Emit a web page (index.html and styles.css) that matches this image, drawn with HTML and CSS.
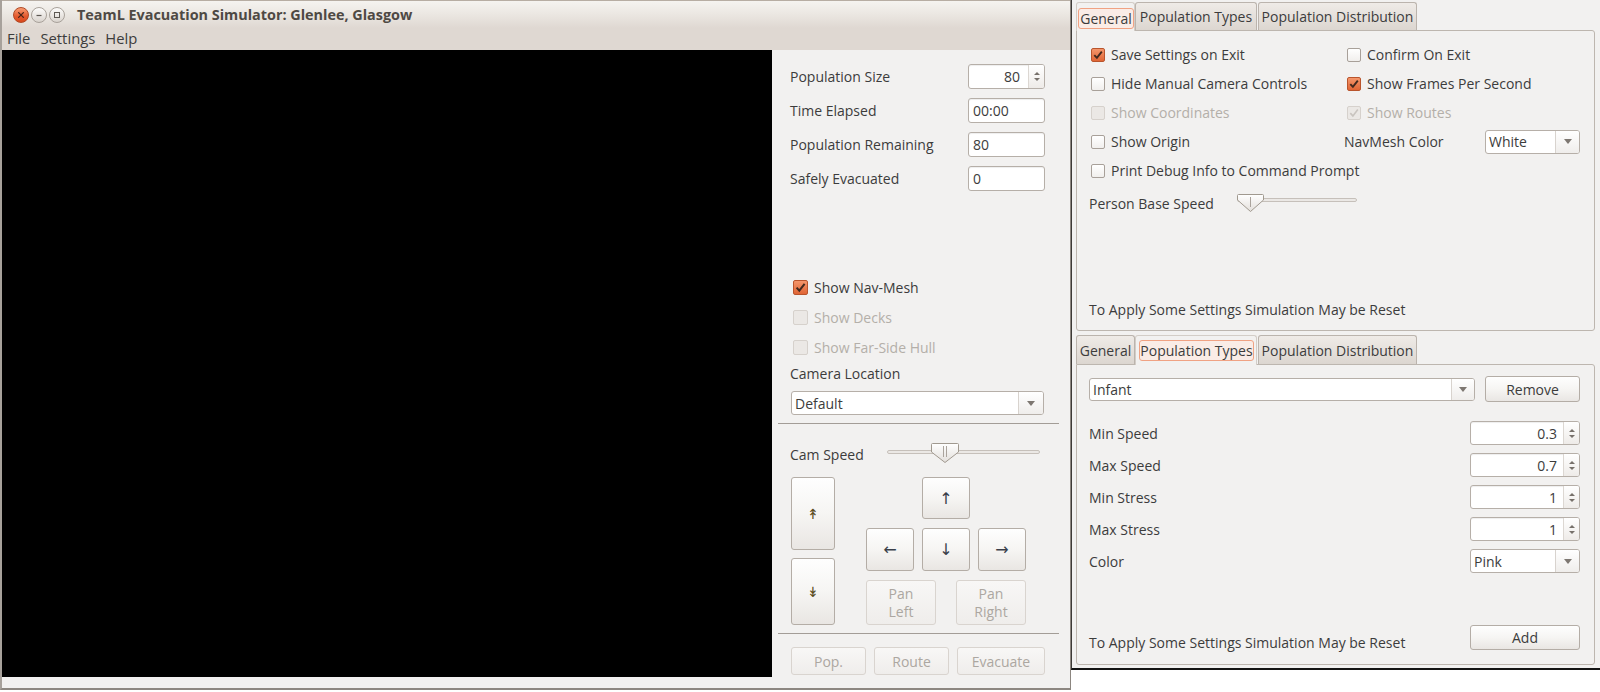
FILE: index.html
```html
<!DOCTYPE html>
<html lang="en">
<head>
<meta charset="utf-8">
<title>TeamL Evacuation Simulator</title>
<link rel="stylesheet" href="styles.css">
</head>
<body>
<div class="screen">
  <div class="main">
    <div class="titlebar">
      <div class="wbtns">
        <span class="wb close"><svg width="14" height="14" viewBox="0 0 14 14"><path d="M4.6 4.6L9.4 9.4M9.4 4.6L4.6 9.4" stroke="#4a2418" stroke-width="1.3" stroke-linecap="round"/></svg></span>
        <span class="wb"><svg width="14" height="14" viewBox="0 0 14 14"><path d="M4.5 7.5H9.5" stroke="#5d5852" stroke-width="1.2"/></svg></span>
        <span class="wb"><svg width="14" height="14" viewBox="0 0 14 14"><rect x="4.5" y="4.5" width="5" height="5" fill="none" stroke="#5d5852"/></svg></span>
      </div>
      <div class="title">TeamL Evacuation Simulator: Glenlee, Glasgow</div>
    </div>
    <div class="menubar"><span>File</span><span>Settings</span><span>Help</span></div>
    <div class="content">
      <div class="viewport"><div class="canvas"></div></div>
      <div class="panel">
        <div class="info">
          <span class="lbl">Population Size</span>
          <div class="field spin"><span class="val">80</span><span class="arr"><i class="tri up"></i><i class="tri dn"></i></span></div>
          <span class="lbl">Time Elapsed</span>
          <div class="field"><span class="val">00:00</span></div>
          <span class="lbl">Population Remaining</span>
          <div class="field"><span class="val">80</span></div>
          <span class="lbl">Safely Evacuated</span>
          <div class="field"><span class="val">0</span></div>
        </div>
        <div class="checks">
          <div class="chk"><span class="box on"><svg width="13" height="13" viewBox="0 0 13 13"><path d="M2.6 6.6L5.3 9.6L10.6 2.8" fill="none" stroke="#42291e" stroke-width="2"/></svg></span>Show Nav-Mesh</div>
          <div class="chk dis"><span class="box"></span>Show Decks</div>
          <div class="chk dis"><span class="box"></span>Show Far-Side Hull</div>
        </div>
        <div class="camlbl">Camera Location</div>
        <div class="combo loc"><span class="val">Default</span><span class="drop"><i class="tri dn big"></i></span></div>
        <div class="sep"></div>
        <div class="speed">
          <span>Cam Speed</span>
          <svg class="slider" width="153" height="20" viewBox="0 0 153 20">
            <defs><linearGradient id="hg1" x1="0" y1="0" x2="0" y2="1"><stop offset="0" stop-color="#ffffff"/><stop offset="1" stop-color="#e3dfdb"/></linearGradient></defs>
            <rect x="0.5" y="7.5" width="152" height="3" rx="1.5" fill="#ebe8e5" stroke="#c6c0ba"/>
            <path d="M45.5 0.5H70.5Q71.5 0.5 71.5 1.5V9L58 19.5L44.5 9V1.5Q44.5 0.5 45.5 0.5Z" fill="url(#hg1)" stroke="#a0998f"/>
            <path d="M56.5 3V14M59.5 3V14" stroke="#aaa39c"/>
          </svg>
        </div>
        <div class="pad">
          <div class="zcol">
            <div class="btn t1"><span class="zz">↟</span></div>
            <div class="btn t2"><span class="zz">↡</span></div>
          </div>
          <div class="dpad">
            <div class="drow r1"><div class="btn ar">↑</div></div>
            <div class="drow r2"><div class="btn ar">←</div><div class="btn ar">↓</div><div class="btn ar">→</div></div>
            <div class="drow r3"><div class="btn pan dis">Pan<br>Left</div><div class="btn pan dis">Pan<br>Right</div></div>
          </div>
        </div>
        <div class="sep s2"></div>
        <div class="actions">
          <div class="btn dis w75">Pop.</div>
          <div class="btn dis w75">Route</div>
          <div class="btn dis w88">Evacuate</div>
        </div>
      </div>
    </div>
  </div>

  <div class="settings">
    <div class="tw tw1">
      <div class="tabbar">
        <div class="tab sel w59"><span>General</span></div>
        <div class="tab w122 gap">Population Types</div>
        <div class="tab w159">Population Distribution</div>
      </div>
      <div class="pane gen">
        <div class="grid2">
          <div class="chk"><span class="box on"><svg width="12" height="12" viewBox="0 0 12 12"><path d="M2.3 6.1L4.9 8.9L9.8 2.6" fill="none" stroke="#42291e" stroke-width="1.9"/></svg></span>Save Settings on Exit</div>
          <div class="chk"><span class="box"></span>Confirm On Exit</div>
          <div class="chk"><span class="box"></span>Hide Manual Camera Controls</div>
          <div class="chk"><span class="box on"><svg width="12" height="12" viewBox="0 0 12 12"><path d="M2.3 6.1L4.9 8.9L9.8 2.6" fill="none" stroke="#42291e" stroke-width="1.9"/></svg></span>Show Frames Per Second</div>
          <div class="chk dis"><span class="box"></span>Show Coordinates</div>
          <div class="chk dis"><span class="box on"><svg width="12" height="12" viewBox="0 0 12 12"><path d="M2.3 6.1L4.9 8.9L9.8 2.6" fill="none" stroke="#c9c4bf" stroke-width="1.6"/></svg></span>Show Routes</div>
          <div class="chk"><span class="box"></span>Show Origin</div>
          <div class="navrow"><span class="navlbl">NavMesh Color</span><div class="combo c95"><span class="val">White</span><span class="drop d24"><i class="tri dn big"></i></span></div></div>
          <div class="chk full"><span class="box"></span>Print Debug Info to Command Prompt</div>
        </div>
        <div class="pbs">
          <span>Person Base Speed</span>
          <svg width="120" height="18" viewBox="0 0 120 18">
            <defs><linearGradient id="hg2" x1="0" y1="0" x2="0" y2="1"><stop offset="0" stop-color="#ffffff"/><stop offset="1" stop-color="#e3dfdb"/></linearGradient></defs>
            <rect x="0.5" y="4.5" width="119" height="3" rx="1.5" fill="#ebe8e5" stroke="#c6c0ba"/>
            <path d="M1.5 0.5H25.5Q26.5 0.5 26.5 1.5V6L13.5 17.5L0.5 6V1.5Q0.5 0.5 1.5 0.5Z" fill="url(#hg2)" stroke="#a0998f"/>
            <path d="M13.5 3V13" stroke="#aaa39c"/>
          </svg>
        </div>
        <div class="note">To Apply Some Settings Simulation May be Reset</div>
      </div>
    </div>

    <div class="tw tw2">
      <div class="tabbar">
        <div class="tab w59">General</div>
        <div class="tab sel w122 gap"><span>Population Types</span></div>
        <div class="tab w159">Population Distribution</div>
      </div>
      <div class="pane pt">
        <div class="selrow">
          <div class="combo infant"><span class="val">Infant</span><span class="drop d23"><i class="tri dn big"></i></span></div>
          <div class="btn remove">Remove</div>
        </div>
        <div class="form">
          <span class="lbl">Min Speed</span>
          <div class="field spin s110"><span class="val">0.3</span><span class="arr"><i class="tri up"></i><i class="tri dn"></i></span></div>
          <span class="lbl">Max Speed</span>
          <div class="field spin s110"><span class="val">0.7</span><span class="arr"><i class="tri up"></i><i class="tri dn"></i></span></div>
          <span class="lbl">Min Stress</span>
          <div class="field spin s110"><span class="val">1</span><span class="arr"><i class="tri up"></i><i class="tri dn"></i></span></div>
          <span class="lbl">Max Stress</span>
          <div class="field spin s110"><span class="val">1</span><span class="arr"><i class="tri up"></i><i class="tri dn"></i></span></div>
          <span class="lbl">Color</span>
          <div class="combo s110"><span class="val">Pink</span><span class="drop d24"><i class="tri dn big"></i></span></div>
        </div>
        <div class="foot">
          <div class="note2">To Apply Some Settings Simulation May be Reset</div>
          <div class="btn add">Add</div>
        </div>
      </div>
    </div>
  </div>
</div>
</body>
</html>
```

FILE: styles.css
```css
* { box-sizing: border-box; margin: 0; padding: 0; }
html, body { width: 1600px; height: 692px; overflow: hidden; }
body {
  background: #ffffff;
  font-family: "Open Sans", "Noto Sans", "DejaVu Sans", sans-serif;
  font-size: 14px;
  color: #3c3c3c;
}
.screen { display: flex; align-items: flex-start; }

/* ---------- main window ---------- */
.main {
  width: 1071px; height: 690px; flex: none;
  display: flex; flex-direction: column;
  background: #f2f1f0;
  border-left: 2px solid #a7a19b;
  border-right: 1px solid #8c8680;
  border-bottom: 2px solid #8d8781;
}
.titlebar {
  height: 28px; flex: none;
  display: flex; align-items: center;
  border-top: 1px solid #b7ada3;
  background: linear-gradient(#f5f3f0 0%, #ece8e3 45%, #dfd8d2 100%);
}
.wbtns { display: flex; gap: 2px; padding-left: 11px; }
.wb {
  width: 16px; height: 16px; border-radius: 50%;
  border: 1px solid #a8a19a;
  background: linear-gradient(#fdfcfb, #d9d3cd);
  display: flex; align-items: center; justify-content: center;
}
.wb svg { display: block; }
.wb.close {
  border-color: #b04824;
  background: linear-gradient(#f89c72, #e4592d 60%, #d9481c);
}
.title {
  margin-left: 12px;
  font-weight: bold;
  color: #4e4944;
  font-size: 14.4px;
  line-height: 27px;
}
.menubar {
  height: 22px; flex: none;
  background: #dfd8d2;
  display: flex; align-items: center;
  padding: 0 0 3px 5px; gap: 10px;
  font-size: 14.8px;
  color: #3c3c3c;
}
.content { flex: 1; display: flex; }
.viewport { width: 770px; flex: none; }
.canvas { height: 627px; background: #000; }

.panel {
  flex: 1;
  display: flex; flex-direction: column;
  padding: 14px 26px 0 18px;
}
.info {
  display: grid;
  grid-template-columns: 1fr 77px;
  row-gap: 9px;
  align-items: center;
}
.lbl { white-space: nowrap; }
.field {
  height: 25px;
  background: #fff;
  border: 1px solid #b6afa8;
  border-radius: 3px;
  box-shadow: inset 0 1px 1px rgba(0,0,0,0.07);
  display: flex; align-items: stretch;
}
.field .val { flex: 1; padding-left: 4px; display: flex; align-items: center; }
.spin .val { justify-content: flex-end; padding-right: 8px; padding-left: 0; }
.arr {
  width: 16px; flex: none;
  border-left: 1px solid #dcd7d2;
  background: linear-gradient(#ffffff, #eeebe8);
  border-radius: 0 2px 2px 0;
  display: flex; flex-direction: column;
  align-items: center; justify-content: center; gap: 3px;
}
.tri {
  display: block; width: 0; height: 0;
  border-left: 3px solid transparent;
  border-right: 3px solid transparent;
}
.tri.up { border-bottom: 3px solid #77716b; }
.tri.dn { border-top: 3px solid #77716b; }
.tri.big {
  border-left-width: 4px; border-right-width: 4px;
  border-top: 5px solid #7d7771;
}

.checks { margin-top: 81px; display: flex; flex-direction: column; }
.chk { display: flex; align-items: center; gap: 6px; white-space: nowrap; }
.checks .chk { height: 30px; padding-left: 3px; }
.box {
  width: 14px; height: 14px; flex: none;
  border: 1px solid #a8a099;
  border-radius: 2px;
  background: linear-gradient(#ffffff, #f1efed);
  display: flex; align-items: center; justify-content: center;
}
.checks .box { width: 15px; height: 15px; }
.box svg { display: block; }
.box.on {
  background: linear-gradient(#f4966b, #e06535);
  border-color: #b9542c;
}
.dis { color: #b4afa9; }
.dis .box, .dis .box.on { background: #ebe8e5; border-color: #d6d1cc; }

.camlbl { margin-top: 2px; line-height: 20px; }
.combo {
  background: #fff;
  border: 1px solid #b6afa8;
  border-radius: 3px;
  display: flex; align-items: stretch;
}
.combo .val { flex: 1; padding-left: 3px; display: flex; align-items: center; }
.combo .drop {
  width: 25px; flex: none;
  border-left: 1px solid #d8d3ce;
  background: linear-gradient(#ffffff, #efedeb);
  border-radius: 0 2px 2px 0;
  display: flex; align-items: center; justify-content: center;
}
.combo .drop.d24 { width: 24px; }
.combo .drop.d23 { width: 23px; }
.combo.loc { margin: 7px 0 0 1px; height: 24px; width: 253px; }

.sep { margin: 8px -14px 0 -12px; border-top: 1px solid #a39d97; }
.speed {
  margin-top: 21px;
  display: grid; grid-template-columns: 97px 153px;
  align-items: start;
}
.speed span { line-height: 20px; }
.speed svg { display: block; margin-top: -2px; }

.pad { margin-top: 12px; display: flex; }
.zcol { width: 44px; margin-left: 1px; display: flex; flex-direction: column; gap: 8px; }
.t1 { height: 73px; }
.t2 { height: 67px; }
.zz { font-family: "DejaVu Sans", sans-serif; font-size: 14px; color: #5a4c1c; }
.dpad { margin-left: 31px; width: 160px; display: flex; flex-direction: column; }
.drow { display: flex; }
.r1 { height: 42px; padding-left: 56px; }
.r2 { margin-top: 9px; height: 43px; gap: 8px; }
.r3 { margin-top: 9px; height: 45px; justify-content: space-between; }
.btn {
  color: #3c3c3c;
  border: 1px solid #b4ada6;
  border-radius: 3px;
  background: linear-gradient(#fefefe, #f6f5f3 50%, #e9e6e3);
  display: flex; align-items: center; justify-content: center;
  text-align: center;
}
.btn.ar {
  width: 48px; height: 100%;
  font-family: "DejaVu Sans", sans-serif; font-size: 16px; color: #3a3f4a;
}
.btn.pan { width: 70px; height: 100%; line-height: 18px; }
.btn.dis {
  color: #aca7a1;
  border-color: #d9d4cf;
  background: linear-gradient(#f8f7f6, #efedeb);
}
.sep.s2 { margin-top: 8px; }
.actions { margin-top: 13px; margin-left: 1px; display: flex; gap: 8px; }
.actions .btn { height: 28px; }
.w75 { width: 75px; }
.w88 { width: 88px; }

/* ---------- settings window ---------- */
.settings {
  width: 529px; height: 670px; flex: none;
  background: #f2f1f0;
  border-left: 1px solid #3d3a37;
  border-bottom: 2px solid #141414;
  padding: 2px 5px 0 4px;
  display: flex; flex-direction: column;
}
.tw2 { margin-top: 4px; }
.tabbar { display: flex; align-items: flex-end; }
.tw1 .tabbar { height: 28px; }
.tw2 .tabbar { height: 29px; }
.tab {
  height: 100%; flex: none;
  border: 1px solid #bbb4ad;
  border-bottom: none;
  border-radius: 3px 3px 0 0;
  background: linear-gradient(#efebe7, #dcd6d0);
  display: flex; align-items: center; justify-content: center;
  white-space: nowrap;
  color: #3c3c3c;
}
.tab.gap { margin-right: 1px; }
.w59 { width: 59px; }
.w122 { width: 122px; }
.w159 { width: 159px; }
.tab.sel {
  position: relative; z-index: 1;
  height: calc(100% + 1px);
  margin-bottom: -1px;
  background: #f2f1f0;
  border-color: #d3cdc7;
  align-items: flex-start; justify-content: flex-start;
}
.tab.sel span {
  height: 21px;
  border: 1px solid #f0a283;
  border-radius: 3px;
  background: #faece6;
  display: flex; align-items: center; justify-content: center;
}
.tw1 .tab.sel { padding: 5px 0 0 1px; }
.tw1 .tab.sel span { width: 56px; }
.tw2 .tab.sel { padding: 4px 0 0 3px; }
.tw2 .tab.sel span { width: 115px; }

.pane {
  height: 301px;
  border: 1px solid #bdb6af;
  border-radius: 0 3px 3px 3px;
  display: flex; flex-direction: column;
}
.gen { padding: 9px 14px 10px 14px; }
.grid2 {
  display: grid;
  grid-template-columns: 256px 1fr;
  grid-auto-rows: 29px;
  align-items: center;
}
.full { grid-column: 1 / span 2; }
.navrow { display: flex; align-items: center; }
.navlbl { margin-left: -3px; }
.combo.c95 { width: 95px; height: 24px; margin-left: auto; }
.pbs {
  margin: 3px 0 0 -2px;
  height: 30px;
  display: grid; grid-template-columns: 148px 120px;
  align-items: center;
}
.pbs svg { display: block; }
.note { margin-top: auto; margin-left: -2px; line-height: 20px; }

.pt { padding: 11px 14px 14px 12px; }
.selrow { display: flex; align-items: center; gap: 10px; height: 26px; }
.combo.infant { flex: 1; height: 23px; }
.btn.remove { width: 95px; height: 26px; }
.form {
  margin-top: 19px;
  display: grid;
  grid-template-columns: 1fr 110px;
  grid-auto-rows: 24px;
  row-gap: 8px;
  align-items: center;
}
.form .field { height: 24px; }
.s110 { height: 24px; }
.s110 .val { padding-right: 6px; }
.combo.s110 .val { padding-right: 0; }
.foot { margin-top: auto; display: flex; justify-content: space-between; align-items: flex-end; }
.note2 { line-height: 20px; margin-bottom: -3px; }
.btn.add { width: 110px; height: 25px; }
```
